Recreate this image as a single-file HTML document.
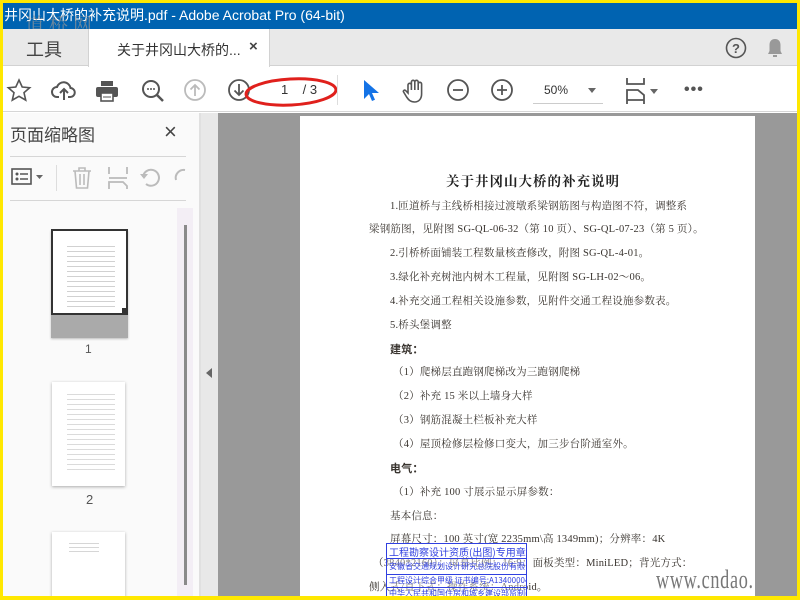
<!DOCTYPE html>
<html><head><meta charset="utf-8"><style>
*{margin:0;padding:0;box-sizing:border-box}
body{width:800px;height:600px;overflow:hidden;background:#FFE800;position:relative;font-family:"Liberation Sans","Noto Sans CJK SC",sans-serif}
.a{position:absolute}
.t{position:absolute;white-space:nowrap;font-family:"Liberation Serif","Noto Serif CJK SC",serif;font-size:10.5px;line-height:16px;color:#3a3530;letter-spacing:0.2px}
.b{font-weight:bold;font-family:"Liberation Sans","Noto Sans CJK SC",sans-serif}
svg{position:absolute}
.st div{white-space:nowrap;overflow:hidden;padding-left:2px}
</style></head><body>
<div class="a" style="left:3px;top:3px;width:794px;height:593px;background:#fff;overflow:hidden">
 <div class="a" style="left:0;top:0;width:794px;height:26px;background:#0063B1;color:#fff;font-size:14px;line-height:25px;padding-left:1px">井冈山大桥的补充说明.pdf - Adobe Acrobat Pro (64-bit)</div>
 <div class="a" style="left:22px;top:8px;font-size:19px;color:rgba(150,150,150,.7);letter-spacing:5px;font-family:'Noto Serif CJK SC',serif;line-height:26px">道桥网</div>
 <div class="a" style="left:0;top:26px;width:794px;height:37px;background:#E9E9E9;border-bottom:1px solid #d2d2d2"></div>
 <div class="a" style="left:23px;top:33px;font-size:18px;color:#444">工具</div>
 <div class="a" style="left:85px;top:26px;width:182px;height:38px;background:#fff;border-left:1px solid #d2d2d2;border-right:1px solid #d2d2d2"></div>
 <div class="a" style="left:114px;top:37px;font-size:14px;color:#333">关于井冈山大桥的...</div>
 <div class="a" style="left:246px;top:35px;font-size:15px;color:#444;font-weight:bold">×</div>
 <svg style="left:722px;top:34px" width="22" height="22"><circle cx="11" cy="11" r="9.5" fill="none" stroke="#555" stroke-width="1.6"/><text x="11" y="16" font-size="13" font-weight="bold" text-anchor="middle" fill="#555" font-family="Liberation Sans">?</text></svg>
 <svg style="left:763px;top:34px" width="18" height="22"><path d="M9 2c-4 0-5.5 3-5.5 6v6L2 17h14l-1.5-3V8C14.5 5 13 2 9 2z" fill="#999"/><rect x="7" y="18" width="4" height="2" fill="#999"/></svg>
 <div class="a" style="left:0;top:64px;width:794px;height:45px;background:#fff;border-bottom:1px solid #d6d6d6"></div>
 <svg style="left:3px;top:75px" width="26" height="26"><path d="M13 2l3.2 7 7.5.7-5.7 5 1.7 7.4L13 18.3 6.3 22.1 8 14.7 2.3 9.7l7.5-.7z" fill="none" stroke="#555" stroke-width="1.6"/></svg>
 <svg style="left:48px;top:75px" width="26" height="26"><path d="M8 19H6a5 5 0 0 1 0-10 7 7 0 0 1 13.5 1A4.5 4.5 0 0 1 19 19h-2M13 22V12M9 15l4-4 4 4" fill="none" stroke="#555" stroke-width="2"/></svg>
 <svg style="left:91px;top:75px" width="26" height="26"><rect x="7" y="3" width="12" height="5" fill="#555"/><rect x="2" y="9" width="22" height="10" rx="2" fill="#555"/><rect x="7" y="15" width="12" height="8" fill="#fff" stroke="#555" stroke-width="1.6"/><line x1="9" y1="19" x2="17" y2="19" stroke="#555"/></svg>
 <svg style="left:137px;top:75px" width="26" height="26"><circle cx="11" cy="11" r="8" fill="none" stroke="#555" stroke-width="2"/><path d="M17 17l6 6" stroke="#555" stroke-width="2.5"/><circle cx="8" cy="11" r="1" fill="#555"/><circle cx="11" cy="11" r="1" fill="#555"/><circle cx="14" cy="11" r="1" fill="#555"/></svg>
 <svg style="left:180px;top:75px" width="24" height="24"><circle cx="12" cy="12" r="10" fill="none" stroke="#bbb" stroke-width="1.8"/><path d="M12 18V7M7.5 11.5L12 7l4.5 4.5" fill="none" stroke="#bbb" stroke-width="1.8"/></svg>
 <svg style="left:224px;top:75px" width="24" height="24"><circle cx="12" cy="12" r="10" fill="none" stroke="#555" stroke-width="1.8"/><path d="M12 6v11M7.5 12.5L12 17l4.5-4.5" fill="none" stroke="#555" stroke-width="1.8"/></svg>
 <svg style="left:240px;top:72px" width="96" height="34"><ellipse cx="48" cy="17" rx="45" ry="13" fill="none" stroke="#e0201c" stroke-width="3" transform="rotate(-3 48 17)"/></svg>
 <div class="a" style="left:278px;top:79px;font-size:13px;color:#333">1&nbsp;&nbsp;&nbsp;&nbsp;/ 3</div>
 <div class="a" style="left:334px;top:72px;width:1px;height:30px;background:#ddd"></div>
 <svg style="left:357px;top:75px" width="20" height="26"><path d="M4 2v19l5-5 3 7 3-1.3-3-6.7h7z" fill="#1473e6"/></svg>
 <svg style="left:398px;top:74px" width="26" height="28"><path d="M7 16V8a1.7 1.7 0 0 1 3.4 0v5V5a1.7 1.7 0 0 1 3.4 0v8V5a1.7 1.7 0 0 1 3.4 0v8V7a1.7 1.7 0 0 1 3.4 0v10c0 5-3 8-7 8s-6-2-8-5l-3-5c-.8-1.3 1-2.6 2-1.5z" fill="none" stroke="#555" stroke-width="1.6"/></svg>
 <svg style="left:443px;top:75px" width="24" height="24"><circle cx="12" cy="12" r="10" fill="none" stroke="#555" stroke-width="1.8"/><path d="M7 12h10" stroke="#555" stroke-width="1.8"/></svg>
 <svg style="left:487px;top:75px" width="24" height="24"><circle cx="12" cy="12" r="10" fill="none" stroke="#555" stroke-width="1.8"/><path d="M7 12h10M12 7v10" stroke="#555" stroke-width="1.8"/></svg>
 <div class="a" style="left:541px;top:80px;font-size:12px;color:#333">50%</div>
 <div class="a" style="left:585px;top:85px;border:4px solid transparent;border-top:5px solid #666"></div>
 <div class="a" style="left:530px;top:100px;width:70px;height:1px;background:#ccc"></div>
 <svg style="left:623px;top:74px" width="20" height="28"><path d="M1 1v6h17V1M1 27V13h11l6 5v9M1 23h17" fill="none" stroke="#555" stroke-width="1.8"/></svg>
 <div class="a" style="left:647px;top:86px;border:4px solid transparent;border-top:5px solid #666"></div>
 <div class="a" style="left:681px;top:78px;font-size:16px;color:#555;letter-spacing:1px;font-weight:bold">•••</div>
 <div class="a" style="left:0;top:110px;width:196px;height:483px;background:#FAFAFA"></div>
 <div class="a" style="left:7px;top:118px;font-size:17px;color:#444">页面缩略图</div>
 <div class="a" style="left:161px;top:116px;font-size:22px;color:#444">×</div>
 <div class="a" style="left:7px;top:153px;width:176px;height:1px;background:#d6d6d6"></div>
 <svg style="left:8px;top:164px" width="34" height="22"><rect x="1" y="2" width="19" height="15" fill="none" stroke="#555" stroke-width="1.6"/><circle cx="6" cy="7" r="1.5" fill="#555"/><circle cx="6" cy="12" r="1.5" fill="#555"/><path d="M9 7h8M9 12h8" stroke="#555" stroke-width="1.5"/><path d="M25 8h7l-3.5 4z" fill="#666"/></svg>
 <div class="a" style="left:53px;top:162px;width:1px;height:26px;background:#ddd"></div>
 <svg style="left:68px;top:163px" width="22" height="24"><path d="M2 5h18M8 5V2h6v3M4 5l1.5 17h11L18 5M9 8v11M13 8v11" fill="none" stroke="#bbb" stroke-width="1.6"/></svg>
 <svg style="left:104px;top:163px" width="22" height="24"><path d="M2 1v7M20 1v7M2 12h18M2 23v-7h14l4 4v3" fill="none" stroke="#bbb" stroke-width="1.8"/></svg>
 <svg style="left:136px;top:164px" width="22" height="22"><path d="M4 10a8 8 0 1 1 3 7" fill="none" stroke="#bbb" stroke-width="2"/><path d="M1 7l4 5 4-5z" fill="#bbb"/></svg>
 <svg style="left:170px;top:164px" width="14" height="22"><path d="M12 3a8 8 0 0 0-9 10" fill="none" stroke="#bbb" stroke-width="2"/></svg>
 <div class="a" style="left:7px;top:197px;width:176px;height:1px;background:#d6d6d6"></div>
 <div class="a" style="left:174px;top:205px;width:16px;height:388px;background:#F3EEF5"></div>
 <div class="a" style="left:181px;top:222px;width:3px;height:360px;background:#8a8a8a"></div>
 <div class="a" style="left:48px;top:227px;width:77px;height:108px;background:#aaa;box-shadow:0 1px 2px #bbb"></div>
 <div class="a" style="left:48px;top:226px;width:77px;height:86px;background:#fff;border:2px solid #333"></div>
 <div class="a" style="left:119px;top:305px;width:6px;height:6px;background:#333"></div>
 <div class="a" style="left:64px;top:240px;width:48px;height:68px;background:repeating-linear-gradient(#fff 0 3px,#999 3px 4px,#fff 4px 5px);opacity:.45"></div>
 <div class="a" style="left:82px;top:339px;font-size:12px;color:#555">1</div>
 <div class="a" style="left:49px;top:379px;width:73px;height:104px;background:#fff;box-shadow:0 1px 3px #aaa"></div>
 <div class="a" style="left:64px;top:388px;width:48px;height:80px;background:repeating-linear-gradient(#fff 0 3px,#999 3px 4px,#fff 4px 5px);opacity:.35"></div>
 <div class="a" style="left:83px;top:489px;font-size:13px;color:#555">2</div>
 <div class="a" style="left:49px;top:529px;width:73px;height:70px;background:#fff;box-shadow:0 1px 3px #aaa"></div>
 <div class="a" style="left:66px;top:537px;width:30px;height:14px;background:repeating-linear-gradient(#fff 0 3px,#999 3px 4px);opacity:.4"></div>
 <div class="a" style="left:196px;top:110px;width:2px;height:483px;background:#e0e0e0"></div>
 <div class="a" style="left:198px;top:110px;width:17px;height:483px;background:#E8E8E8"></div>
 <div class="a" style="left:203px;top:365px;border:5px solid transparent;border-right:6px solid #666;border-left:0"></div>
 <div class="a" style="left:215px;top:110px;width:579px;height:483px;background:#999"></div>
 <div class="a" style="left:297px;top:113px;width:455px;height:480px;background:#fff"></div>
 <div class="t b" style="left:443px;top:171px;font-size:13.5px;letter-spacing:1px;color:#222;font-family:'Liberation Sans','Noto Serif CJK SC',serif">关于井冈山大桥的补充说明</div>
 <div class="t" style="left:387px;top:196px">1.匝道桥与主线桥相接过渡墩系梁钢筋图与构造图不符，调整系</div>
 <div class="t" style="left:366px;top:219px">梁钢筋图，见附图 SG-QL-06-32（第 10 页）、SG-QL-07-23（第 5 页）。</div>
 <div class="t" style="left:387px;top:243px">2.引桥桥面铺装工程数量核查修改，附图 SG-QL-4-01。</div>
 <div class="t" style="left:387px;top:267px">3.绿化补充树池内树木工程量，见附图 SG-LH-02～06。</div>
 <div class="t" style="left:387px;top:291px">4.补充交通工程相关设施参数，见附件交通工程设施参数表。</div>
 <div class="t" style="left:387px;top:315px">5.桥头堡调整</div>
 <div class="t b" style="left:387px;top:339px;font-size:11px">建筑：</div>
 <div class="t" style="left:390px;top:362px">（1）爬梯层直跑钢爬梯改为三跑钢爬梯</div>
 <div class="t" style="left:390px;top:386px">（2）补充 15 米以上墙身大样</div>
 <div class="t" style="left:390px;top:410px">（3）钢筋混凝土栏板补充大样</div>
 <div class="t" style="left:390px;top:434px">（4）屋顶检修层检修口变大，加三步台阶通室外。</div>
 <div class="t b" style="left:387px;top:458px;font-size:11px">电气：</div>
 <div class="t" style="left:390px;top:482px">（1）补充 100 寸展示显示屏参数：</div>
 <div class="t" style="left:387px;top:506px">基本信息：</div>
 <div class="t" style="left:387px;top:529px">屏幕尺寸：100 英寸(宽 2235mm\高 1349mm)；分辨率：4K</div>
 <div class="t" style="left:370px;top:553px">（3840*2160）；屏幕比例：16:9；面板类型：MiniLED；背光方式：</div>
 <div class="t" style="left:366px;top:577px">侧入式/直下式；操作系统：Android。</div>
 <div class="a st" style="left:383px;top:540px;width:141px;height:56px;border:1.5px solid #3040e0;color:#3040e0;font-size:8px;line-height:12px;font-family:'Noto Sans CJK SC',sans-serif;background:rgba(255,255,255,.35)">
  <div style="border-bottom:1px solid #3040e0;font-size:10px;height:15px;line-height:15px">工程勘察设计资质(出图)专用章</div>
  <div style="border-bottom:1px solid #3040e0;height:16px;line-height:16px">安徽省交通规划设计研究总院股份有限公司</div>
  <div style="border-bottom:1px solid #3040e0;height:13px">工程设计综合甲级 证书编号:A134000046</div>
  <div>中华人民共和国住房和城乡建设部监制(A)</div>
 </div>
 <div class="a" style="left:653px;top:562px;font-size:26px;color:#777;font-family:'Liberation Serif',serif;transform:scaleX(.7);transform-origin:left;letter-spacing:1px;line-height:30px">www.cndao.</div>
</div>
</body></html>
